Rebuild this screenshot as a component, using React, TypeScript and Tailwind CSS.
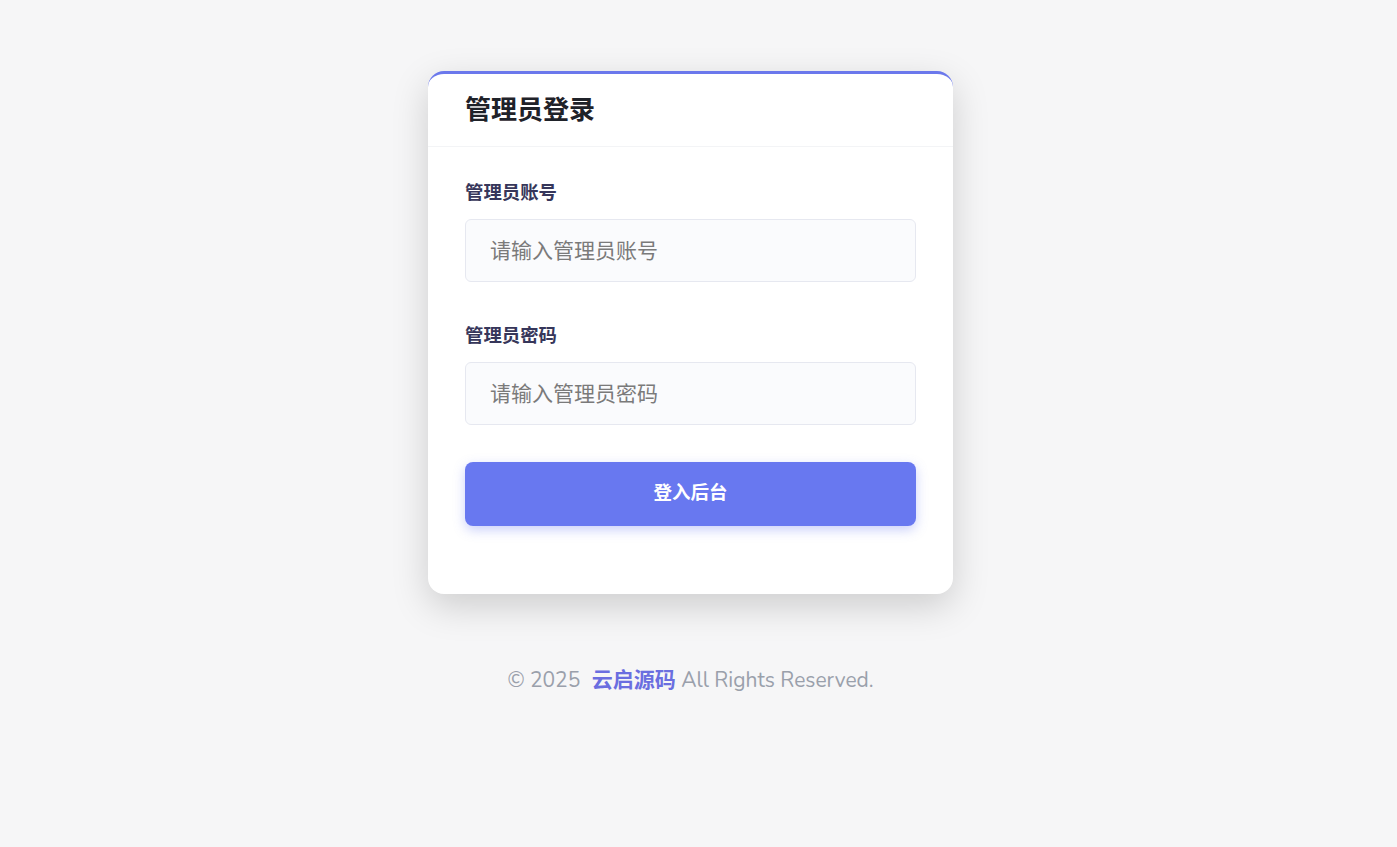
export default function App() {
  const font = { fontFamily: '"Nunito", "Lato", "Noto Sans CJK SC", sans-serif' };

  return (
    <div className="min-h-screen bg-[#f6f6f7] flex flex-col items-center pt-[71px] pr-[16px]" style={font}>
      {/* 登录卡片 */}
      <div className="w-[525px] bg-white rounded-[16px] border-t-[3px] border-[#6b78ec] shadow-[0_12px_36px_rgba(0,0,0,0.17)] overflow-hidden">
        <div className="px-[37px] pt-[21px] pb-[19px] border-b border-[#f3f4f6]">
          <h1 className="text-[26px] leading-[32px] font-bold text-[#1f2229]">管理员登录</h1>
        </div>

        <div className="px-[37px] pt-[34px] pb-[68px]">
          <label className="block text-[18.4px] leading-[24px] font-bold text-[#36365a] mb-[14px]">管理员账号</label>
          <input
            type="text"
            placeholder="请输入管理员账号"
            className="w-full h-[63px] px-[24px] text-[21px] bg-[#fafbfd] border border-[#e6e8f0] rounded-[6px] text-[#333] placeholder:text-[#7a7a7a] outline-none"
          />

          <label className="block mt-[42px] text-[18.4px] leading-[24px] font-bold text-[#36365a] mb-[14px]">管理员密码</label>
          <input
            type="password"
            placeholder="请输入管理员密码"
            className="w-full h-[63px] px-[24px] text-[21px] bg-[#fafbfd] border border-[#e6e8f0] rounded-[6px] text-[#333] placeholder:text-[#7a7a7a] outline-none"
          />

          <button className="mt-[37px] w-full h-[64px] bg-[#6878f0] rounded-[8px] text-white text-[18.5px] font-bold shadow-[0_4px_12px_rgba(104,120,240,0.35)]">
            登入后台
          </button>
        </div>
      </div>

      {/* フッター */}
      <p className="mt-[72px] text-[21px] leading-[28px] text-[#9aa0ab]">
        © 2025 <span className="ml-[6px] font-bold text-[#6a6ee0]">云启源码</span> All Rights Reserved.
      </p>
    </div>
  );
}
